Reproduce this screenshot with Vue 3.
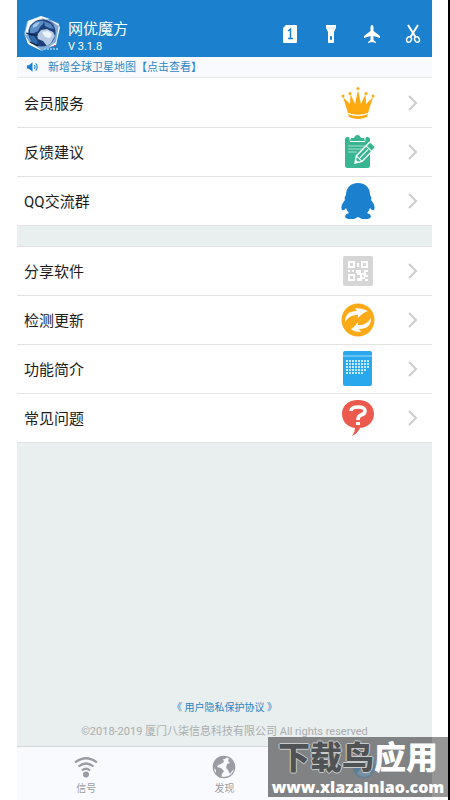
<script setup>
const tools = [
  { id: 'sim', label: 'SIM 卡' },
  { id: 'torch', label: '手电筒' },
  { id: 'plane', label: '飞行模式' },
  { id: 'cut', label: '截图' },
]
const groups = [
  [
    { id: 'crown', text: '会员服务' },
    { id: 'note', text: '反馈建议' },
    { id: 'qq', text: 'QQ交流群' },
  ],
  [
    { id: 'qr', text: '分享软件' },
    { id: 'sync', text: '检测更新' },
    { id: 'calendar', text: '功能简介' },
    { id: 'help', text: '常见问题' },
  ],
]
const dots = []
for (let r = 0; r < 5; r++) {
  for (let c = 0; c < 8; c++) {
    if ((r === 3 && c > 6) || (r === 4 && c > 5)) continue
    dots.push({ x: 3 + c * 3, y: 9 + r * 3 })
  }
}
</script>

<template>
  <div class="frame">
    <div class="app">
      <header class="top">
        <svg class="logo" viewBox="0 0 38 38" aria-hidden="true">
          <path d="M4 6 18 1 35 8 37 12 33 30 19 36 5 29 1 19Z" fill="#7fabd8" />
          <path d="M5 6 18 1 27 4 18 5 7 10 4 20 2 19Z" fill="#f4f8fd" />
          <path d="M18 3 30 8 33 17 29 12Z" fill="#5d62a0" />
          <path d="M2 20 6 27 14 32 19 36 5 29Z" fill="#fff" />
          <path d="M27 5 36 9 33 27 26 32 33 30 37 12Z" fill="#f4f8fd" />
          <circle cx="19" cy="18" r="13.500" fill="#1d4079" />
          <path d="M7 13Q12 4 21 6L20 9 17 12 15 16 11 18 7 18Z" fill="#5c8fc8" />
          <path d="M10 10Q13 7 17 7L14 11 10 13Z" fill="#a5c8e8" />
          <path d="M21 6 28 9 31 14 26 13 22 11Z" fill="#5587c0" />
          <path d="M14 20 18 15 24 14 30 17 32 21 28 28 24 31 20 26 15 24Z" fill="#b7cce4" />
          <path d="M19 17 25 16 29 19 27 23 22 22Z" fill="#edf3fa" />
          <path d="M6 20 11 21 15 27 13 30 8 26Z" fill="#2d6bab" />
          <path d="M3 18 9 20 15 20M7 27 15 31" fill="none" stroke="#0c1c3e" stroke-width="1.200" />
          <path d="M21 34H36" stroke="#7fbce6" stroke-width="2" stroke-dasharray="2 1" />
          <circle cx="32" cy="31" r="1" fill="#c3475c" />
        </svg>
        <div class="brand">
          <h1>网优魔方</h1>
          <p>V 3.1.8</p>
        </div>
        <nav class="tools">
          <button v-for="t in tools" :key="t.id" type="button" :aria-label="t.label">
            <svg v-if="t.id === 'sim'" viewBox="0 0 20 20">
              <path d="M6 1H16Q17 1 17 2V18Q17 19 16 19H4Q3 19 3 18V4Z" fill="#fff" />
              <path d="M8 7 10.500 5V14M8 14.500H13" fill="none" stroke="#1b80cd" stroke-width="1.500" />
            </svg>
            <svg v-else-if="t.id === 'torch'" viewBox="0 0 20 20">
              <path d="M5 1H15V4L13 8V18Q13 19 12 19H8Q7 19 7 18V8L5 4Z" fill="#fff" />
              <path d="M5 4H15" stroke="#b5d7ef" stroke-width=".7" />
              <rect x="9" y="12" width="2" height="4" rx="1" fill="#1b80cd" />
            </svg>
            <svg v-else-if="t.id === 'plane'" viewBox="0 0 20 20">
              <path d="M10 1Q8.500 1 8.500 4V7L2 12V14L8.500 12V16L6 18V19L10 18 14 19V18L11.500 16V12L18 14V12L11.500 7V4Q11.500 1 10 1Z" fill="#fff" />
            </svg>
            <svg v-else viewBox="0 0 20 20" fill="none" stroke="#fff" stroke-width="1.500">
              <ellipse cx="6" cy="15.500" rx="2.300" ry="2.800" transform="rotate(28 6 15.500)" />
              <ellipse cx="14" cy="15.500" rx="2.300" ry="2.800" transform="rotate(-28 14 15.500)" />
              <path d="M5 1 12.500 13M15 1 7.500 13" stroke-width="2" />
            </svg>
          </button>
        </nav>
      </header>

      <a class="notice" href="#map">
        <svg viewBox="0 0 14 12" aria-hidden="true">
          <path d="M1 4H3L7 1V11L3 8H1Z" fill="#1b80cd" />
          <path d="M9 4Q10.500 6 9 8M10.500 2Q13.500 6 10.500 10" fill="none" stroke="#1b80cd" stroke-width="1.200" />
        </svg>
        <span>新增全球卫星地图【点击查看】</span>
      </a>

      <main>
        <ul v-for="(g, i) in groups" :key="i" class="group">
          <li v-for="item in g" :key="item.id">
            <a class="row" :href="'#' + item.id">
              <span class="name">{{ item.text }}</span>
              <svg v-if="item.id === 'crown'" class="pic" viewBox="0 0 36 36">
                <path d="M3 12 10 19 10.500 9 15 19 18 5 21 19 25.500 9 26 19 33 12 28 28Q18 32 8 28Z" fill="#fdaa10" />
                <g fill="#fdaa10"><circle cx="3" cy="11" r="1.500" /><circle cx="10" cy="8.500" r="1.500" /><circle cx="18" cy="3.500" r="1.500" /><circle cx="26" cy="8.500" r="1.500" /><circle cx="33" cy="11" r="1.500" /></g>
                <path d="M8 29Q18 33 28 29L27 32Q18 36 9 32Z" fill="#fdaa10" />
                <path d="M8 28.500Q18 32 28 28.500" fill="none" stroke="#fff" stroke-width=".8" />
              </svg>
              <svg v-else-if="item.id === 'note'" class="pic" viewBox="0 0 36 36">
                <rect x="5" y="3" width="25" height="31" rx="2.500" fill="#38b692" />
                <path d="M9 2H26L25 8H10Z" fill="#fff" />
                <path d="M10 7 11 4H14Q15 1 17.500 1T21 4H24L25 7Z" fill="#38b692" />
                <path d="M8 12H25M8 15H22M8 18H17" stroke="#a6dfcf" stroke-width="1" />
                <g transform="translate(15 29) rotate(-46)">
                  <path d="M0 0 6-4H24Q26-4 26-2V2Q26 4 24 4H6Z" fill="#38b692" stroke="#fff" stroke-width="1.400" />
                  <path d="M6-4V4M20-4V4M7 0H19" fill="none" stroke="#fff" stroke-width="1" />
                  <path d="M0 0 3-2V2Z" fill="#fff" />
                </g>
              </svg>
              <svg v-else-if="item.id === 'qq'" class="pic" viewBox="0 0 36 36">
                <path d="M18 0C10 0 6 5 6 12Q4 14 5 17Q0 23 2 27Q4 28 6 25Q7 28 9 30Q5 31 5 34Q7 37 14 36L18 34 22 36Q29 37 31 34Q31 31 27 30Q29 28 30 25Q32 28 34 27Q36 23 31 17Q32 14 30 12C30 5 26 0 18 0Z" fill="#1b80cd" />
              </svg>
              <svg v-else-if="item.id === 'qr'" class="pic" viewBox="0 0 36 36">
                <rect x="3" y="3" width="30" height="30" rx="2" fill="#d6d6d6" />
                <g fill="none" stroke="#fff" stroke-width="2"><rect x="9" y="9" width="5" height="5" /><rect x="22" y="9" width="5" height="5" /><rect x="9" y="22" width="5" height="5" /></g>
                <path d="M17 10H19V14H17ZM8 17H10V19H8ZM12 17H14V19H12ZM16 17H21V20H24V17H28V19H26V22H28V24H25V26H28V28H25V26H22V28H17V25H20V22H17V20H16ZM22 22V24H24V22Z" fill="#fff" fill-rule="evenodd" />
              </svg>
              <svg v-else-if="item.id === 'sync'" class="pic" viewBox="0 0 36 36">
                <circle cx="18" cy="18" r="16.500" fill="#fdaa18" />
                <path d="M5 20Q5 9 17 9L15 6Q22 6 28 9 22 11 18 16L18 13Q10 12 5 20Z" fill="#fff" />
                <path d="M31 16Q31 27 19 27L21 30Q14 30 11 27 15 25 18 20L18 23Q26 24 31 16Z" fill="#fff" />
              </svg>
              <svg v-else-if="item.id === 'calendar'" class="pic" viewBox="-3 0 36 36">
                <rect x="0" y="0" width="29" height="35" rx="2" fill="#29a8ed" />
                <path d="M0 5H29" stroke="#a5dcfa" stroke-width="1" />
                <rect v-for="d in dots" :key="d.x + '-' + d.y" :x="d.x" :y="d.y" width="2" height="2" fill="#c8eaff" />
              </svg>
              <svg v-else class="pic" viewBox="0 0 36 36">
                <path d="M18 0C8 0 2 6 2 14C2 22 8 27 15 28Q15 32 12 36Q18 33 20 28C29 27 34 21 34 14C34 6 28 0 18 0Z" fill="#ec594d" />
                <path d="M11 11Q11 7 18 7T25 11Q25 14 21 15Q18 16 18 20" fill="none" stroke="#fff" stroke-width="3.600" />
                <rect x="16" y="22" width="4" height="3" fill="#fff" />
              </svg>
              <svg class="arrow" viewBox="0 0 10 16" aria-hidden="true"><path d="M1 1 8 8 1 15" fill="none" stroke="#cccccc" stroke-width="2" /></svg>
            </a>
          </li>
        </ul>
      </main>

      <footer class="legal">
        <a href="#privacy">《 用户隐私保护协议 》</a>
        <p>©2018-2019 厦门八柒信息科技有限公司 All rights reserved</p>
      </footer>

      <nav class="tabs">
        <a href="#signal">
          <svg viewBox="0 0 24 24" fill="none" stroke="#9a9ca3" stroke-width="2.200">
            <path d="M1 7.500Q12-1 23 7.500M4.500 11.500Q12 5.500 19.500 11.500M8 15.500Q12 12 16 15.500" />
            <circle cx="12" cy="19.500" r="3" fill="#9a9ca3" stroke="none" />
          </svg>
          <span>信号</span>
        </a>
        <a href="#discover">
          <svg viewBox="0 0 24 24">
            <circle cx="12" cy="12" r="10.700" fill="#f8f9fd" stroke="#9a9ca3" stroke-width="1.200" />
            <path d="M1 12Q1 4 8 2L12 1 15 2 13 4 11 4 12 7 9 9 6 10 5 12 9 13 12 16 10 19 9 23Q6 22 4 19L4 15Z" fill="#9a9ca3" />
            <path d="M17 3Q23 7 23 13L20 16 18 19 16 15 14 13 15 9 18 8 16 6Z" fill="#9a9ca3" />
          </svg>
          <span>发现</span>
        </a>
        <a href="#me" aria-label="我的"></a>
      </nav>
    </div>

    <div class="mark">
      <svg class="blob" viewBox="0 0 24 24" aria-hidden="true">
        <circle cx="12" cy="12" r="11" fill="#5b7f99" /><circle cx="12" cy="9" r="4" fill="#7890a0" /><path d="M5 19Q6 14 12 14T19 19Q12 25 5 19Z" fill="#7890a0" />
      </svg>
      <strong><span class="dark">下载鸟</span><span>应用</span></strong>
      <b>www.xlazaInlao.com</b>
    </div>
  </div>
</template>

<style>
body { margin: 0; background: #fff; }
</style>

<style scoped>
.frame { position: relative; box-sizing: border-box; min-height: 100vh; padding: 0 16px 0 17px; border-right: 2px solid #000; font-family: Roboto, "Noto Sans CJK SC", sans-serif; }
.app { display: flex; flex-direction: column; min-height: 100vh; background: #e9eeee; }
h1, p, ul { margin: 0; padding: 0; font-weight: 400; }
a { text-decoration: none; color: inherit; }
.top { display: flex; align-items: center; height: 57px; box-sizing: border-box; padding: 10px 9px 0 6px; background: #1b80cd; color: #fff; }
.logo { width: 38px; height: 38px; }
.brand { flex: 1; padding: 7px 0 0 7px; }
h1 { font-size: 15px; line-height: 20px; }
.brand p { font-size: 11px; line-height: 16px; }
.tools { display: flex; gap: 21px; }
.tools button { width: 20px; height: 20px; padding: 0; border: 0; background: none; }
.tools svg { display: block; width: 20px; height: 20px; }
.notice { display: flex; align-items: center; gap: 9px; height: 20px; padding-left: 9px; border-bottom: 1px solid #e8e9ec; background: #f9fafe; color: #2f87c5; font-size: 11px; line-height: 20px; }
.notice svg { width: 13px; height: 12px; }
.notice span { padding-top: 2px; }
.group { list-style: none; background: #fff; padding-top: 1px; }
.group + .group { margin-top: 20px; padding-top: 0; border-top: 1px solid #e0e2e2; }
.row { display: flex; align-items: center; height: 48px; padding: 0 14px 0 7px; border-bottom: 1px solid #e3e3e4; color: #1c1c1c; }
.name { flex: 1; padding-top: 2px; font-size: 15px; line-height: 24px; }
.pic { width: 36px; height: 36px; margin-right: 32px; }
.arrow { width: 10px; height: 16px; }
.legal { flex: 1; display: flex; flex-direction: column; justify-content: flex-end; align-items: center; padding-bottom: 6px; text-align: center; }
.legal a { color: #2c83c2; font-size: 10px; line-height: 16px; }
.legal p { margin-top: 8px; color: #a9adad; font-size: 11px; line-height: 16px; }
.tabs { display: grid; grid-template-columns: repeat(3, 1fr); height: 53px; border-top: 1px solid #d5d8da; background: #f9fafe; }
.tabs a { display: flex; flex-direction: column; align-items: center; padding-top: 8px; color: #9a9ca3; font-size: 10px; line-height: 20px; }
.tabs svg { width: 24px; height: 24px; }
.mark { position: absolute; right: 0; bottom: 3px; box-sizing: border-box; display: flex; flex-direction: column; align-items: center; width: 180px; height: 60px; padding-top: 2px; background: linear-gradient(to left, #969696 16px, #808283 16px); color: #fff; }
.mark strong { position: relative; font-size: 32px; line-height: 38px; font-weight: 900; white-space: nowrap; }
.dark { color: #505355; text-shadow: 1px 0 #c8caca, -1px 0 #c8caca, 0 1px #c8caca, 0 -1px #c8caca; }
.mark b { position: relative; font-family: "Open Sans", sans-serif; font-size: 16px; line-height: 20px; font-weight: 800; }
.blob { position: absolute; left: 84px; top: 18px; width: 24px; height: 24px; }
</style>
